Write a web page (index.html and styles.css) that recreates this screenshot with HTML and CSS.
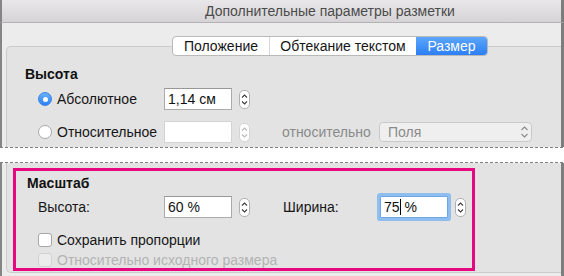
FILE: index.html
```html
<!DOCTYPE html>
<html lang="ru">
<head>
<meta charset="utf-8">
<title>Дополнительные параметры разметки</title>
<link rel="stylesheet" href="styles.css">
</head>
<body>
<div class="window">
  <div class="titlebar">Дополнительные параметры разметки</div>
  <div class="upper">
    <div class="tabs">
      <div class="tab t1">Положение</div>
      <div class="tab t2">Обтекание текстом</div>
      <div class="tab t3 active">Размер</div>
    </div>
    <div class="panel-top">
      <div class="heading">Высота</div>
      <div class="grid-h">
        <div class="opt"><span class="radio on"></span>Абсолютное</div>
        <div class="field">1,14 см</div>
        <svg class="stepper" width="11" height="19" viewBox="0 0 11 19"><rect x="0.5" y="0.5" width="10" height="18" rx="4.5" fill="#fff" stroke="#b0b0b0"/><path d="M3 7.5 L5.5 5 L8 7.5 M3 11.5 L5.5 14 L8 11.5" fill="none" stroke="#3c3c3c" stroke-width="1.1"/></svg>
        <div class="opt"><span class="radio"></span>Относительное</div>
        <div class="field disabled"></div>
        <svg class="stepper" width="11" height="19" viewBox="0 0 11 19"><rect x="0.5" y="0.5" width="10" height="18" rx="4.5" fill="#fff" stroke="#d4d4d4"/><path d="M3 7.5 L5.5 5 L8 7.5 M3 11.5 L5.5 14 L8 11.5" fill="none" stroke="#b8b8b8" stroke-width="1.1"/></svg>
        <span class="muted">относительно</span>
        <div class="select"><span>Поля</span><svg width="9" height="14" viewBox="0 0 9 14"><path d="M1.5 5 L4.5 2 L7.5 5 M1.5 9 L4.5 12 L7.5 9" fill="none" stroke="#8a8a8a" stroke-width="1.1"/></svg></div>
      </div>
    </div>
  </div>
  <div class="cut"></div>
  <div class="lower">
    <div class="panel-bottom">
      <div class="highlight">
        <div class="heading">Масштаб</div>
        <div class="grid-s">
          <span>Высота:</span>
          <div class="field">60 %</div>
          <svg class="stepper" width="11" height="19" viewBox="0 0 11 19"><rect x="0.5" y="0.5" width="10" height="18" rx="4.5" fill="#fff" stroke="#b0b0b0"/><path d="M3 7.5 L5.5 5 L8 7.5 M3 11.5 L5.5 14 L8 11.5" fill="none" stroke="#3c3c3c" stroke-width="1.1"/></svg>
          <span>Ширина:</span>
          <div class="field focus">75<span class="caret"></span> %</div>
          <svg class="stepper" width="11" height="19" viewBox="0 0 11 19"><rect x="0.5" y="0.5" width="10" height="18" rx="4.5" fill="#fff" stroke="#b0b0b0"/><path d="M3 7.5 L5.5 5 L8 7.5 M3 11.5 L5.5 14 L8 11.5" fill="none" stroke="#3c3c3c" stroke-width="1.1"/></svg>
        </div>
        <div class="check first"><span class="box"></span>Сохранить пропорции</div>
        <div class="check disabled"><span class="box"></span>Относительно исходного размера</div>
      </div>
    </div>
  </div>
</div>
</body>
</html>
```
FILE: styles.css
```css
body {
  margin: 0;
  font-family: "Liberation Sans", Arial, sans-serif;
  font-size: 14px;
  color: #161616;
}
.window {
  width: 564px;
  height: 276px;
  background: #ececec;
  overflow: hidden;
  display: flex;
  flex-direction: column;
}
.titlebar {
  height: 22px;
  flex: none;
  border-bottom: 1px solid #b3b3b3;
  border-left: 2px solid #858585;
  border-right: 3px solid #7d7d7d;
  background: linear-gradient(#e9e7e9, #d5d3d5);
  padding-left: 203px;
  line-height: 22px;
  color: #4b4b4b;
}
.upper, .lower {
  border-left: 2px solid #858585;
  border-right: 3px solid #7d7d7d;
}
.upper { flex: none; }
.lower { flex: 1; }
.tabs {
  position: relative;
  z-index: 1;
  display: flex;
  width: max-content;
  height: 20px;
  box-sizing: border-box;
  margin: 13px 0 0 170px;
  border: 1px solid #b9b9b9;
  border-radius: 4px;
  background: #fff;
  overflow: hidden;
}
.tab {
  line-height: 18px;
  text-align: center;
  box-sizing: border-box;
}
.t1 { width: 97px; border-right: 1px solid #d6d6d6; }
.t2 { width: 146px; }
.t3 { width: 71px; }
.active {
  background: linear-gradient(#5ba6fb, #2c7ff5);
  color: #fff;
}
.panel-top {
  margin: -10px 0 0 4px;
  border-top: 1px solid #cbcbcb;
  border-left: 1px solid #cbcbcb;
  border-top-left-radius: 5px;
  background: #e3e3e3;
  padding: 19px 0 4px 18px;
}
.heading {
  font-weight: bold;
  line-height: 16px;
  color: #111;
}
.grid-h {
  margin: 6px 0 0 13px;
  display: grid;
  grid-template-columns: 126px 75px 43px 97px 153px;
  grid-auto-rows: 22px;
  row-gap: 11px;
  align-items: center;
}
.opt {
  grid-column: 1;
  display: flex;
  align-items: center;
  gap: 5px;
}
.radio {
  flex: none;
  width: 14px;
  height: 14px;
  box-sizing: border-box;
  border-radius: 50%;
  border: 1px solid #a9a9a9;
  background: #fff;
}
.radio.on {
  display: grid;
  place-items: center;
  border-color: #3a84ea;
  background: linear-gradient(#6ab2fb, #2b80f5);
}
.radio.on::after {
  content: "";
  width: 5px;
  height: 5px;
  border-radius: 50%;
  background: #fff;
}
.field {
  width: 68px;
  height: 22px;
  box-sizing: border-box;
  background: #fff;
  border: 1px solid #ababab;
  border-top-color: #979797;
  padding-left: 3px;
  line-height: 20px;
  color: #111;
}
.field.disabled {
  border-color: #d3d3d3;
}
.field.focus {
  border-color: #6fa6e6;
  border-radius: 1px;
  box-shadow: 0 0 0 3px #8fbdf0;
}
.caret {
  display: inline-block;
  width: 1px;
  height: 16px;
  background: #000;
  vertical-align: -3px;
}
.stepper { display: block; }
.muted { color: #8a8a8a; }
.select {
  height: 20px;
  box-sizing: border-box;
  border: 1px solid #c9c9c9;
  border-radius: 4px;
  background: #efefef;
  color: #8a8a8a;
  padding: 0 2px 0 8px;
  display: flex;
  align-items: center;
  justify-content: space-between;
}
.select svg { display: block; }
.cut {
  flex: none;
  height: 16px;
  background:
    repeating-linear-gradient(90deg, #7f7f7f 0 3px, transparent 3px 5px) 0 0 / 100% 1px no-repeat,
    repeating-linear-gradient(90deg, #7f7f7f 0 3px, transparent 3px 5px) 0 100% / 100% 1px no-repeat,
    #fff;
}
.panel-bottom {
  margin-left: 4px;
  border-left: 1px solid #cbcbcb;
  border-bottom: 1px solid #cbcbcb;
  border-bottom-left-radius: 5px;
  background: #e3e3e3;
  padding: 5px 0 1px 6px;
}
.highlight {
  width: 462px;
  height: 103px;
  box-sizing: border-box;
  border: 3px solid #e6087f;
  padding: 4px 0 0 11px;
}
.grid-s {
  margin: 5px 0 0 11px;
  display: grid;
  grid-template-columns: 126px 75px 44px 97px 75px 11px;
  grid-auto-rows: 22px;
  align-items: center;
}
.check {
  display: flex;
  align-items: center;
  gap: 5px;
  margin: 4px 0 0 11px;
  line-height: 16px;
}
.check.first { margin-top: 14px; }
.box {
  flex: none;
  width: 14px;
  height: 14px;
  box-sizing: border-box;
  border: 1px solid #a7a7a7;
  border-radius: 3px;
  background: #fff;
}
.check.disabled { color: #b3b3b3; }
.check.disabled .box {
  border-color: #d2d2d2;
  background: #ececec;
}
```
